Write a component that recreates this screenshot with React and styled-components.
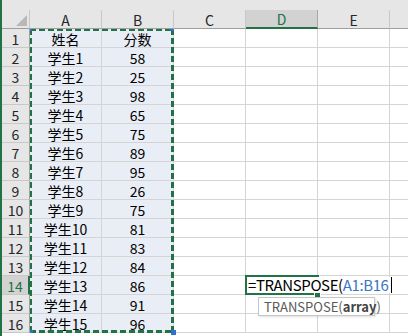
import React from 'react';
import styled, { createGlobalStyle } from 'styled-components';

const GlobalStyle = createGlobalStyle`
  html, body {
    margin: 0;
    padding: 0;
    background: #ffffff;
    overflow: hidden;
  }
  body {
    font-family: "Noto Sans CJK SC", "Noto Sans", sans-serif;
  }
`;

const Sheet = styled.div`
  width: 406px;
  height: 336px;
  border-left: 2px solid #217346;
  overflow: hidden;
  background: #ffffff;
`;

const TopStrip = styled.div`
  height: 10px;
  background: #e6e6e6;
`;

const Grid = styled.div`
  position: relative;
  display: grid;
  grid-template-columns: 28px repeat(6, 72px);
  grid-auto-rows: 19px;
  width: 460px;
`;

const Corner = styled.div`
  position: relative;
  background: #e6e6e6;
  border-right: 1px solid #c8c8c8;
  border-bottom: 1px solid #9e9e9e;

  &::after {
    content: '';
    position: absolute;
    right: 2px;
    bottom: 2px;
    width: 11px;
    height: 11px;
    background: #b8b8b8;
    clip-path: polygon(100% 0, 100% 100%, 0 100%);
  }
`;

const HeaderBase = styled.div`
  display: flex;
  align-items: center;
  justify-content: center;
  box-sizing: border-box;
  font-size: 14px;
  line-height: 18px;
  padding-top: 1px;
`;

const ColHeader = styled(HeaderBase)`
  background: ${(p) => (p.$active ? '#d2d2d2' : '#e6e6e6')};
  color: ${(p) => (p.$active ? '#217346' : '#262626')};
  border-right: 1px solid ${(p) => (p.$active ? '#a8a8a8' : '#c8c8c8')};
  border-bottom: ${(p) => (p.$active ? '2px solid #217346' : '1px solid #9e9e9e')};
`;

const RowHeader = styled(HeaderBase)`
  background: ${(p) => (p.$active ? '#d2d2d2' : '#e6e6e6')};
  color: ${(p) => (p.$active ? '#217346' : '#262626')};
  border-bottom: 1px solid #c8c8c8;
  border-right: ${(p) => (p.$active ? '2px solid #217346' : '1px solid #9e9e9e')};
`;

const Cell = styled.div`
  display: flex;
  align-items: center;
  justify-content: center;
  box-sizing: border-box;
  font-size: 14px;
  line-height: 18px;
  padding-top: 1px;
  color: #000000;
  background: ${(p) => (p.$selected ? '#e9edf5' : '#ffffff')};
  border-right: 1px solid #d4d4d4;
  border-bottom: 1px solid #d4d4d4;
`;

const dashX = (c) => `repeating-linear-gradient(90deg, ${c} 0 6px, transparent 6px 9px)`;
const dashY = (c) => `repeating-linear-gradient(180deg, ${c} 0 6px, transparent 6px 9px)`;

/* copy marquee around A1:B16 */
const Marquee = styled.div`
  position: absolute;
  left: 28px;
  top: 19px;
  width: 144px;
  height: 304px;
  pointer-events: none;
  background:
    ${dashX('#217346')} left top / 100% 2px no-repeat,
    ${dashX('#217346')} left bottom / 100% 3px no-repeat,
    ${dashY('#217346')} left top / 2px 100% no-repeat,
    ${dashY('#217346')} right top / 3px 100% no-repeat;
`;

const handleSpots = {
  tl: 'top: 0; left: 0; width: 2px; height: 2px;',
  tr: 'top: 0; right: 0; width: 4px; height: 2px;',
  bl: 'bottom: 0; left: 0; width: 3px; height: 3px;',
  br: 'bottom: -2px; right: -2px; width: 5px; height: 5px;',
};

const Handle = styled.span`
  position: absolute;
  background: #3170cf;
  ${(p) => handleSpots[p.$corner]}
`;

const EditFrame = styled.div`
  position: absolute;
  left: 243px;
  top: 265px;
  width: 74px;
  height: 20px;
  box-sizing: border-box;
  border: 2px solid #217346;
`;

const FillHandle = styled.span`
  position: absolute;
  right: -4px;
  bottom: -5px;
  width: 5px;
  height: 5px;
  background: #217346;
  border: 1px solid #ffffff;
`;

const EditInput = styled.div`
  position: absolute;
  left: 245px;
  top: 267px;
  width: 145px;
  height: 16px;
  padding-left: 1px;
  box-sizing: border-box;
  background: #ffffff;
  font-size: 15px;
  letter-spacing: -0.4px;
  line-height: 16px;
  color: #000000;
  white-space: nowrap;
  display: flex;
  align-items: center;
`;

const RefText = styled.span`
  color: #3a74c8;
`;

const Caret = styled.span`
  display: inline-block;
  width: 1px;
  height: 16px;
  margin-left: 2px;
  background: #000000;
`;

const Tooltip = styled.div`
  position: absolute;
  left: 256px;
  top: 287px;
  width: 117px;
  height: 19px;
  box-sizing: border-box;
  padding: 0 4px 0 5px;
  background: #ffffff;
  border: 1px solid #c6c6c6;
  box-shadow: 1px 1px 2px rgba(0, 0, 0, 0.12);
  font-size: 13px;
  line-height: 17px;
  color: #595959;
  white-space: nowrap;
`;

const Bold = styled.b`
  font-weight: 700;
  color: #444444;
`;

const columns = ['A', 'B', 'C', 'D', 'E', 'F'];

const rows = [
  ['姓名', '分数'],
  ['学生1', '58'],
  ['学生2', '25'],
  ['学生3', '98'],
  ['学生4', '65'],
  ['学生5', '75'],
  ['学生6', '89'],
  ['学生7', '95'],
  ['学生8', '26'],
  ['学生9', '75'],
  ['学生10', '81'],
  ['学生11', '83'],
  ['学生12', '84'],
  ['学生13', '86'],
  ['学生14', '91'],
  ['学生15', '96'],
];

const App = () => {
  return (
    <>
      <GlobalStyle />
      <Sheet>
        <TopStrip />
        <Grid>
          <Corner />
          {columns.map((c) => (
            // F sits mostly past the window edge, its letter is not visible
            <ColHeader key={c} $active={c === 'D'}>{c === 'F' ? '' : c}</ColHeader>
          ))}
          {rows.map((r, i) => (
            <React.Fragment key={i}>
              <RowHeader $active={i === 13}>{i + 1}</RowHeader>
              {columns.map((c, j) => (
                <Cell key={c} $selected={j < 2}>{j < 2 ? r[j] : ''}</Cell>
              ))}
            </React.Fragment>
          ))}

          <Marquee>
            <Handle $corner="tl" />
            <Handle $corner="tr" />
            <Handle $corner="bl" />
            <Handle $corner="br" />
          </Marquee>

          <EditFrame>
            <FillHandle />
          </EditFrame>
          <EditInput>
            =TRANSPOSE(<RefText>A1:B16</RefText>
            <Caret />
          </EditInput>
          <Tooltip>
            TRANSPOSE(<Bold>array</Bold>)
          </Tooltip>
        </Grid>
      </Sheet>
    </>
  );
};

export default App;
